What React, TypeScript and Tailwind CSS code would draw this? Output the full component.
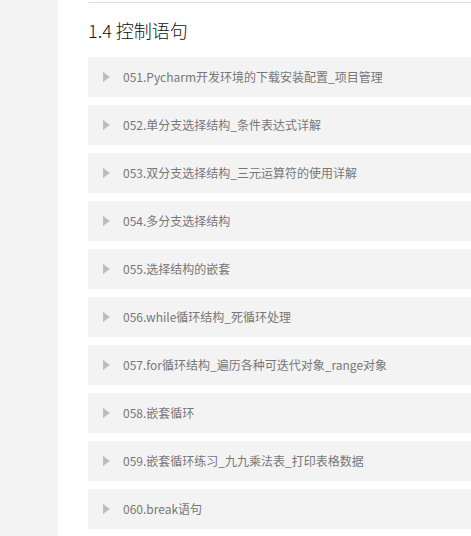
import React from "react";

const items = [
  "051.Pycharm开发环境的下载安装配置_项目管理",
  "052.单分支选择结构_条件表达式详解",
  "053.双分支选择结构_三元运算符的使用详解",
  "054.多分支选择结构",
  "055.选择结构的嵌套",
  "056.while循环结构_死循环处理",
  "057.for循环结构_遍历各种可迭代对象_range对象",
  "058.嵌套循环",
  "059.嵌套循环练习_九九乘法表_打印表格数据",
  "060.break语句",
];

export default function App() {
  return (
    <div
      className="flex w-[471px] h-[536px] overflow-hidden bg-white"
      style={{ fontFamily: '"Microsoft YaHei", "Noto Sans CJK SC", sans-serif' }}
    >
      <div className="w-[58px] shrink-0 bg-[#f3f3f3]" />
      <div className="flex-1 pl-[30px] pt-[2px]">
        <div className="h-px bg-[#dedde8]" />
        <h2 className="text-[18px] leading-[24px] font-light text-[#111] mt-[15px] mb-[15px]">1.4 控制语句</h2>
        <div className="flex flex-col gap-[8px]">
          {items.map((t) => (
            <div key={t} className="h-[40px] bg-[#f3f3f3] flex items-center">
              <svg width="7" height="10" viewBox="0 0 7 10" className="ml-[15px] mr-[13px]">
                <polygon points="0,0 7,5 0,10" fill="#bdbdbd" />
              </svg>
              <span className="text-[12px] text-[#777] whitespace-nowrap">{t}</span>
            </div>
          ))}
        </div>
      </div>
    </div>
  );
}
